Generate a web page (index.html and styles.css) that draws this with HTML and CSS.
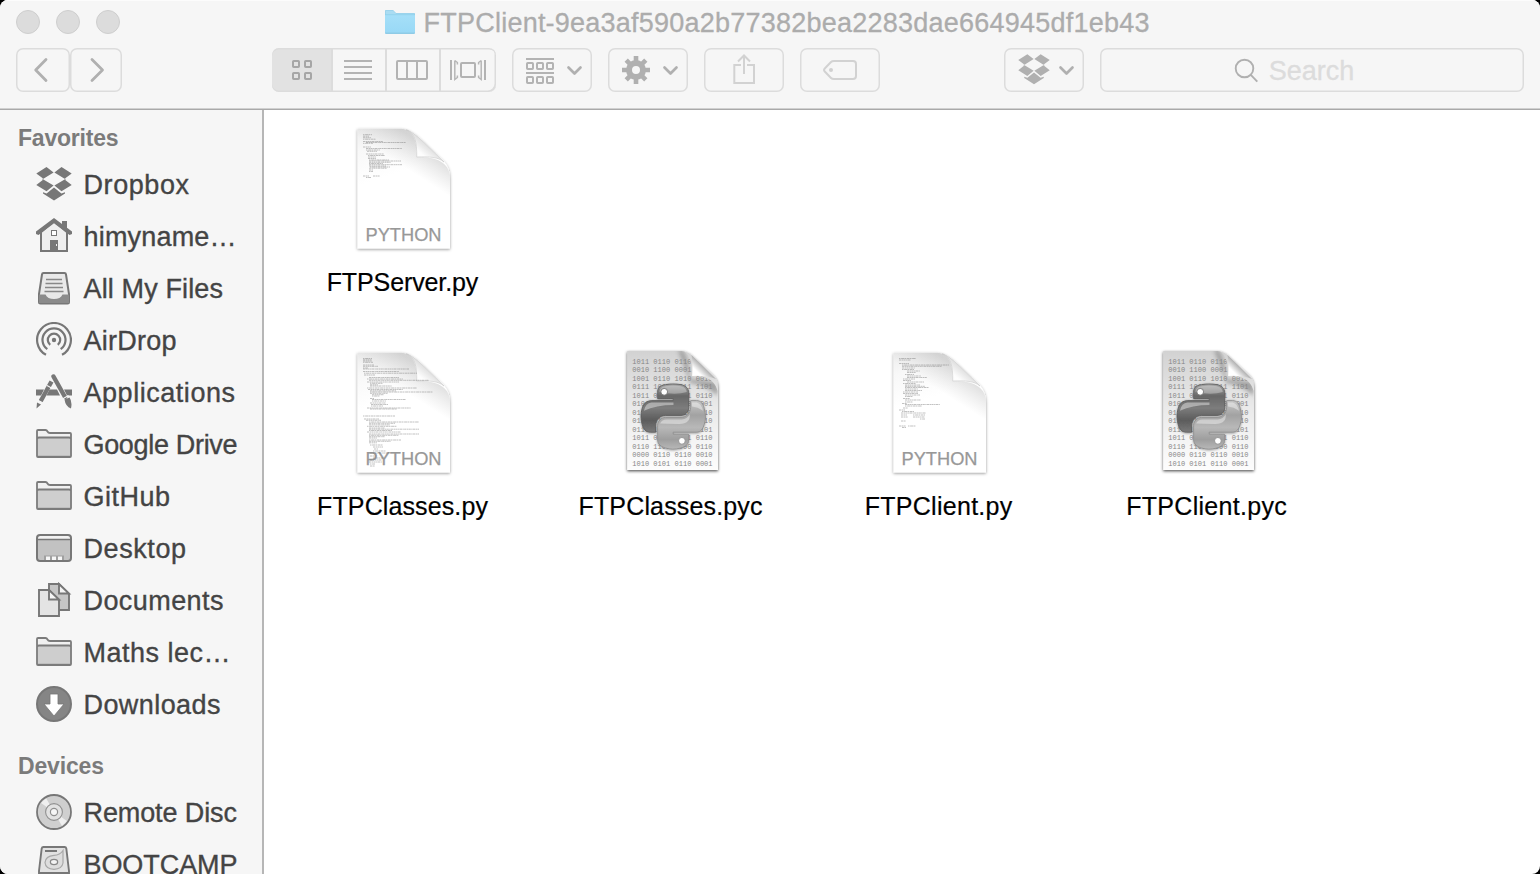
FILE: index.html
```html
<!DOCTYPE html>
<html lang="en">
<head>
<meta charset="utf-8">
<title>Finder</title>
<link rel="stylesheet" href="styles.css">
</head>
<body>
<svg class="defs" aria-hidden="true">
  <defs>
    <linearGradient id="gPage" x1="0" y1="0" x2="0.25" y2="1"><stop offset="0" stop-color="#ededed"/><stop offset=".18" stop-color="#f8f8f8"/><stop offset=".45" stop-color="#fff"/></linearGradient>
    <linearGradient id="gShade" x1="0.25" y1="0.8" x2=".72" y2=".22"><stop offset=".5" stop-color="#bbb" stop-opacity="0"/><stop offset="1" stop-color="#aaa" stop-opacity=".45"/></linearGradient>
    <linearGradient id="gFlap" x1="0" y1="1" x2=".55" y2=".45"><stop offset="0" stop-color="#fff"/><stop offset=".6" stop-color="#fdfdfd"/><stop offset="1" stop-color="#dedede"/></linearGradient>
    <linearGradient id="gByte" x1="0" y1="0" x2="0" y2="1"><stop offset="0" stop-color="#d2d2d2"/><stop offset=".5" stop-color="#ebebeb"/><stop offset="1" stop-color="#fdfdfd"/></linearGradient>
    <linearGradient id="gByteFlap" x1="0" y1="1" x2=".6" y2=".4"><stop offset="0" stop-color="#fff"/><stop offset=".45" stop-color="#fff"/><stop offset="1" stop-color="#8f8f8f"/></linearGradient>
    <linearGradient id="gSnakeA" x1="0" y1="0" x2="0" y2="1"><stop offset="0" stop-color="#a5a5a5"/><stop offset=".25" stop-color="#686868"/><stop offset=".5" stop-color="#7c7c7c"/><stop offset=".75" stop-color="#5c5c5c"/><stop offset="1" stop-color="#7a7a7a"/></linearGradient>
    <linearGradient id="gSnakeB" x1="0" y1="0" x2="0" y2="1"><stop offset="0" stop-color="#c9c9c9"/><stop offset=".3" stop-color="#a2a2a2"/><stop offset=".55" stop-color="#b8b8b8"/><stop offset=".8" stop-color="#9e9e9e"/><stop offset="1" stop-color="#b8b8b8"/></linearGradient>
    <linearGradient id="gFolder" x1="0" y1="0" x2="0" y2="1"><stop offset="0" stop-color="#a5dff8"/><stop offset="1" stop-color="#99d9f6"/></linearGradient>
    <filter id="fDrop" x="-15%" y="-15%" width="130%" height="130%"><feDropShadow dx="0" dy="1" stdDeviation="1.4" flood-color="#000" flood-opacity=".42"/></filter>
    <filter id="fDropDark" x="-15%" y="-15%" width="130%" height="130%"><feDropShadow dx="0" dy="1.2" stdDeviation="1.6" flood-color="#000" flood-opacity=".7"/></filter>
    <filter id="fSoft" x="-40%" y="-40%" width="180%" height="180%"><feGaussianBlur stdDeviation="2.2"/></filter>
    <clipPath id="cByte"><path d="M7.200 5H61.500C70 6 72.300 18 72.300 30C84 30 94 32 97.700 45V124H7.200Z"/></clipPath>

    <symbol id="dropbox" viewBox="0 0 36 36">
      <path d="M0.300 7.500 10.500 1 17.600 6.400 7.400 12.800ZM35.700 7.500 25.500 1 18.400 6.400 28.600 12.800ZM0.300 19 7.400 13.400 17.600 19.400 10.500 25.300ZM35.700 19 28.600 13.400 18.400 19.400 25.500 25.300ZM7 26.300 10.600 27.500 18 21.500 25.400 27.500 29 26.300V27.600L18 34.600 7 27.600Z"/>
      <path d="M6.800 12.600V14M29.200 12.600V14" stroke="currentColor" stroke-width=".6"/>
    </symbol>
    <symbol id="folder" viewBox="0 0 36 36">
      <path d="M1 31V5Q1 4 2 4H9.500Q10.800 4 11.500 5.500T14 7H34Q35 7 35 8V31Z" fill="#f0f0f0"/>
      <path d="M1.500 11H34.500V31H1.500Z" fill="#cecece"/>
      <path d="M2 29.700H34" stroke="#bbb" stroke-width="1"/>
      <path d="M1 30V5Q1 4 2 4H9.500Q10.800 4 11.500 5.500T14 7H34Q35 7 35 8V30Q35 31 34 31H2Q1 31 1 30ZM1 13Q1 11.500 3 11.500H33Q35 11.500 35 13" fill="none" stroke="#7b7b7b" stroke-width="1.800"/>
    </symbol>
    <symbol id="chev" viewBox="0 0 16 10"><path d="M2 2 8 8 14 2" fill="none" stroke="#b0b0b0" stroke-width="2.700" stroke-linecap="round" stroke-linejoin="round"/></symbol>

    <symbol id="sheet" viewBox="0 0 104 132">
      <g filter="url(#fDrop)"><path d="M5.500 6.700H48C60 6.700 66 14.500 92 39.500Q98 46 98 56V126.500H5.500Z" fill="url(#gPage)"/></g>
      <path d="M5.500 6.700H48C60 6.700 65 16 64.700 35C80 34.500 98 38 98 56V80L5.500 80Z" fill="url(#gShade)"/>
      <path d="M54 7.700C63 11 65 20 64.700 35C78 34.500 86 35 92 40L72 20.500Q60 9 54 7.700Z" fill="url(#gFlap)" stroke="#c8c8c8" stroke-width=".6"/>
      <text x="13.500" y="119.300" class="kind" textLength="76" lengthAdjust="spacingAndGlyphs">PYTHON</text>
    </symbol>

    <symbol id="bytecode" viewBox="0 0 104 132">
      <path d="M7.200 5H61.500Q67 5 72 9.500L92 28Q98 33 98 41V124H7.200Z" fill="url(#gByte)" filter="url(#fDropDark)"/>
      <g clip-path="url(#cByte)">
        <path d="M62 4Q69 12 70 33L98 36V50Q84 38 70 37Q64 18 58 4Z" fill="#666" opacity=".5" filter="url(#fSoft)"/>
        <g class="bits">
          <text x="12.200" y="17.600">1011 0110 0110</text>
          <text x="12.200" y="26.100">0010 1100 0001</text>
          <text x="12.200" y="34.600">1001 0110 1010 0010</text>
          <text x="12.200" y="43.100">0111 1010 0011 1101</text>
          <text x="12.200" y="51.600">1011 0110 0101 0110</text>
          <text x="12.200" y="60.100">0101 1010 0110 1001</text>
          <text x="12.200" y="68.600">0110 1100 1010 0110</text>
          <text x="12.200" y="77.100">0110 0101 1100 0110</text>
          <text x="12.200" y="85.600">0110 1010 0110 0101</text>
          <text x="12.200" y="94.100">1011 0110 0101 0110</text>
          <text x="12.200" y="102.600">0110 1100 1000 0110</text>
          <text x="12.200" y="111.100">0000 0110 0110 0010</text>
          <text x="12.200" y="119.600">1010 0101 0110 0001</text>
        </g>
      </g>
      <path d="M71.500 9Q73 18 72.200 30Q85 29 96 33Z" fill="url(#gByteFlap)"/>
      <g transform="translate(21 38) scale(.58)" stroke-width="1.400">
        <g filter="url(#fDrop)">
        <path fill="url(#gSnakeA)" stroke="#5c5c5c" d="M54.919 0c-4.584.022-8.961.413-12.813 1.095C30.760 3.099 28.700 7.295 28.700 15.032v10.219h26.813v3.406H18.638c-7.793 0-14.616 4.684-16.750 13.594-2.462 10.213-2.571 16.586 0 27.250 1.905 7.938 6.457 13.594 14.250 13.594h9.219v-12.250c0-8.850 7.657-16.657 16.750-16.657h26.781c7.455 0 13.407-6.138 13.407-13.625v-25.530c0-7.266-6.130-12.725-13.407-13.937C64.282.328 59.502-.020 54.918 0z"/>
        <path fill="url(#gSnakeB)" stroke="#8b8b8b" d="M85.638 28.657v11.906c0 9.231-7.826 17-16.750 17H42.107c-7.336 0-13.407 6.279-13.407 13.625v25.531c0 7.266 6.319 11.540 13.407 13.625 8.488 2.496 16.627 2.947 26.781 0 6.750-1.954 13.407-5.888 13.407-13.625V86.501H55.513v-3.405h40.188c7.793 0 10.696-5.436 13.406-13.594 2.800-8.399 2.681-16.476 0-27.250-1.925-7.758-5.604-13.594-13.406-13.594z"/>
        </g>
        <path d="M32 14Q32 5 42 4 56 1 69 4 78 6 79 14 60 20 32 14Z" fill="#fff" opacity=".32"/>
        <path d="M5 46Q8 33 18 32H56V36Q26 36 5 46ZM88 32H96Q104 34 107 46 98 40 88 39ZM33 68Q36 61 44 61H70Q80 60 84 52 86 68 66 69 44 68 33 68Z" fill="#fff" opacity=".4"/>
        <circle cx="40" cy="13.500" r="5.800" fill="#fff" stroke="#666"/>
        <circle cx="70.500" cy="98" r="5.800" fill="#fff" stroke="#888"/>
      </g>
    </symbol>
  </defs>
</svg>

<div class="window">
  <header class="toolbar">
    <div class="titlebar">
      <div class="lights"><i></i><i></i><i></i></div>
      <h1 class="title">
        <svg class="proxy" viewBox="0 0 32 26"><path d="M1 24V2Q1 1 2 1H9L12 4H30Q31 4 31 5V24Q31 25 30 25H2Q1 25 1 24Z" fill="#8fcbe6"/><path d="M1.500 5V2.500Q1.500 1.500 2.500 1.500H9L12 4.500H30.500V6H1.500Z" fill="#aadcf2"/><path d="M1 6H31V23.500H1Z" fill="url(#gFolder)"/><path d="M1 5.700H31" stroke="#8ccfec" stroke-width=".8"/></svg>
        <span class="fit" data-width="726">FTPClient-9ea3af590a2b77382bea2283dae664945df1eb43</span>
      </h1>
    </div>
    <div class="tools">
      <div class="nav">
        <button class="btn back"><svg viewBox="16 48 54 44"><path d="M46 59.500 35.700 70 46 80.500" class="arrow"/></svg></button>
        <button class="btn forward"><svg viewBox="70 48 52 44"><path d="M92 59.500 102.500 70 92 80.500" class="arrow"/></svg></button>
      </div>
      <div class="views">
        <button class="seg on"><svg viewBox="272 48 59 44"><g fill="none" stroke="#a6a6a6" stroke-width="2"><rect x="293" y="61" width="6" height="6" rx=".8"/><rect x="305" y="61" width="6" height="6" rx=".8"/><rect x="293" y="73" width="6" height="6" rx=".8"/><rect x="305" y="73" width="6" height="6" rx=".8"/></g></svg></button>
        <button class="seg"><svg viewBox="333 48 52 44"><path d="M344 61H372M344 67H372M344 73H372M344 79H372" class="ln"/></svg></button>
        <button class="seg"><svg viewBox="387 48 52 44"><rect x="397" y="61" width="30" height="18" rx="1" class="ln"/><path d="M407 61V79M417 61V79" class="ln"/></svg></button>
        <button class="seg"><svg viewBox="441 48 55 44"><path d="M451 60V80M485 60V80" class="ln"/><rect x="461" y="63" width="14" height="14" rx="1" class="ln"/><path d="M454.800 60.500V79.500L457.400 77.500V75.500M454.800 60.500 457.400 62.500V64.500M481.200 60.500V79.500L478.600 77.500V75.500M481.200 60.500 478.600 62.500V64.500" fill="none" stroke="#b6b6b6" stroke-width="1.500"/></svg></button>
      </div>
      <button class="btn menu"><svg viewBox="512 48 80 44"><path d="M526 59H554M526 73H554" class="ln"/><g class="ln"><rect x="527" y="63" width="6" height="6" rx=".8"/><rect x="537" y="63" width="6" height="6" rx=".8"/><rect x="547" y="63" width="6" height="6" rx=".8"/><rect x="527" y="77" width="6" height="6" rx=".8"/><rect x="537" y="77" width="6" height="6" rx=".8"/><rect x="547" y="77" width="6" height="6" rx=".8"/></g><use href="#chev" x="566.500" y="65.500" width="16" height="10"/></svg></button>
      <button class="btn menu"><svg viewBox="608 48 80 44"><g stroke="#b0b0b0" stroke-width="4.600"><path d="M636 56V84M622 70H650M626.200 60.200 645.800 79.800M645.800 60.200 626.200 79.800"/></g><circle cx="636" cy="70" r="7" fill="#f6f6f6" stroke="#b0b0b0" stroke-width="6"/><use href="#chev" x="662.500" y="65.500" width="16" height="10"/></svg></button>
      <button class="btn menu"><svg viewBox="704 48 80 44"><path d="M741 65H734.300V83H754V65H747M744 74V55.500M738 61.500 744 55.500 750 61.500" class="pale"/></svg></button>
      <button class="btn menu"><svg viewBox="800 48 80 44"><path d="M824 70Q824 69.200 825 68.200L831 62Q832 61 834 61H853Q856 61 856 64V76Q856 79 853 79H834Q832 79 831 78L825 71.800Q824 70.800 824 70Z" class="pale"/><circle cx="831" cy="70" r="2" fill="#d0d0d0"/></svg></button>
      <button class="btn menu drop"><svg viewBox="1004 48 80 44"><use href="#dropbox" x="1018" y="53.400" width="32" height="32" fill="#b0b0b0" color="#b0b0b0"/><use href="#chev" x="1058.500" y="65.500" width="16" height="10"/></svg></button>
      <div class="btn search"><svg viewBox="0 0 26 26"><circle cx="10.500" cy="10.500" r="8.800"/><path d="M16.800 16.800 23.300 23.700"/></svg><span class="fit" data-width="85.500">Search</span></div>
    </div>
  </header>

  <div class="body">
    <nav class="sidebar">
      <h2><span class="fit" data-width="100.500">Favorites</span></h2>
      <ul>
        <li><svg viewBox="0 0 36 36"><use href="#dropbox" fill="#777" color="#777"/></svg><span class="fit" data-width="105.500">Dropbox</span></li>
        <li><svg viewBox="0 0 36 36"><path d="M5 14V33H31V14L18 3Z" fill="#efefef" stroke="#777" stroke-width="2"/><path d="M26 9V3H31V12ZM18 0 36 13.500V16L33.500 17 18 5.300 2.500 17 0 16V13.500ZM14 22H22V33H14Z" fill="#777"/><rect x="15.500" y="12.500" width="5" height="5" fill="#fff" stroke="#777"/><path d="M20.500 26V28" stroke="#eee"/></svg><span class="fit" data-width="153">himyname…</span></li>
        <li><svg viewBox="0 0 36 36"><path d="M7.500 3H28.500Q29.800 3 30 4.500L33 24V32Q33 33.500 31.500 33.500H4.500Q3 33.500 3 32V24L6 4.500Q6.200 3 7.500 3Z" fill="#e9e9e9" stroke="#777" stroke-width="2"/><path d="M3 24.500H9.500Q11.500 29 18 29T26.500 24.500H33V33H3Z" fill="#8b8b8b"/><path d="M10 9.500H26M9.500 13.500H26.500M9 17.500H27M8.500 21.500H27.500" stroke="#888" stroke-width="1.700"/></svg><span class="fit" data-width="139.500">All My Files</span></li>
        <li><svg viewBox="0 0 36 36"><g fill="none" stroke="#777" stroke-width="2.200"><path d="M10 32.800A16.900 16.900 0 1 1 26 32.800"/><path d="M11.300 27.200A11.500 11.500 0 1 1 24.700 27.200"/><path d="M14.200 22.800A6.200 6.200 0 1 1 21.800 22.800"/></g><circle cx="18" cy="18" r="2.200" fill="#777"/></svg><span class="fit" data-width="93">AirDrop</span></li>
        <li><svg viewBox="0 0 36 36"><path d="M0 15.500H8L5 21.500H0ZM13.500 15.500H21L24 21.500H10.500ZM28 15.500H36V21.500H31Z" fill="#777"/><g fill="none" stroke="#777" stroke-width="4.400"><path d="M17.500 2.500 29 23" stroke-linecap="round"/><path d="M15.500 7.500 4.500 27.500"/></g><path d="M28.500 25.500 33.500 23.500Q36.500 27.500 35 34.500 29.500 32.500 28.500 25.500ZM1 28.500 5 30.500 0.500 34.500Z" fill="#777"/><path d="M11 11.500 15.500 14M26 25.300 32.500 21.500M1.500 26 7.500 29.300" stroke="#f6f6f6" stroke-width="1.100"/></svg><span class="fit" data-width="151.500">Applications</span></li>
        <li><svg viewBox="0 0 36 36"><use href="#folder"/></svg><span class="fit" data-width="154">Google Drive</span></li>
        <li><svg viewBox="0 0 36 36"><use href="#folder"/></svg><span class="fit" data-width="86.500">GitHub</span></li>
        <li><svg viewBox="0 0 36 36"><rect x="1" y="5" width="34" height="26" rx="3" fill="#c2c2c2"/><path d="M2 9V7Q2 6 4 6H32Q34 6 34 7V9Z" fill="#f2f2f2"/><path d="M2 9.500H34" stroke="#777" stroke-width="1.500"/><path d="M8 25.500H28V30.500H8Z" fill="#a0a0a0"/><path d="M10 26.500H14V30H10ZM16 26.500H20V30H16ZM22 26.500H26V30H22Z" fill="#f6f6f6"/><rect x="1" y="5" width="34" height="26" rx="3" fill="none" stroke="#777" stroke-width="2"/></svg><span class="fit" data-width="102.500">Desktop</span></li>
        <li><svg viewBox="0 0 36 36"><g stroke="#777" stroke-width="1.900"><path d="M13 2H23L33 12V28H13Z" fill="#c6c6c6"/><path d="M23 2V11.500H33Z" fill="#f4f4f4"/><path d="M3 8H13L23 18V34H3Z" fill="#e4e4e4"/><path d="M13 8V17.500H23Z" fill="#f6f6f6"/></g></svg><span class="fit" data-width="140">Documents</span></li>
        <li><svg viewBox="0 0 36 36"><use href="#folder"/></svg><span class="fit" data-width="147">Maths lec…</span></li>
        <li><svg viewBox="0 0 36 36"><circle cx="18" cy="18" r="17" fill="#858585" stroke="#777" stroke-width="2"/><path d="M14 8H22V18H28L18 30 8 18H14Z" fill="#fff" stroke="#777" stroke-width=".8"/></svg><span class="fit" data-width="137">Downloads</span></li>
      </ul>
      <h2 class="later"><span class="fit" data-width="86">Devices</span></h2>
      <ul>
        <li><svg viewBox="0 0 36 36"><circle cx="18" cy="18" r="17" fill="#cfcfcf"/><path d="M18 18 5 9 10 4ZM18 18 31 27 26 32Z" fill="#efefef"/><circle cx="18" cy="18" r="17" fill="none" stroke="#777" stroke-width="1.800"/><circle cx="18" cy="18" r="8.400" fill="#e2e2e2" stroke="#909090" stroke-width="1.100"/><circle cx="18" cy="18" r="3.600" fill="#f6f6f6" stroke="#909090" stroke-width="1.200"/></svg><span class="fit" data-width="153.500">Remote Disc</span></li>
        <li><svg viewBox="0 0 36 36"><path d="M7.500 1H28.500Q30 1 30.300 2.500L33 25V33H3V25L5.700 2.500Q6 1 7.500 1Z" fill="#e2e2e2" stroke="#777" stroke-width="1.900"/><path d="M3 27H33" stroke="#777" stroke-width="1.900"/><path d="M9 5H21" stroke="#777" stroke-width="2"/><path d="M27 4.500V17Q26 23 18 23.300 9.500 23 9 16.500 9.500 10 18 9.300 24 9 27 4.500Z" fill="#ddd" stroke="#a8a8a8" stroke-width="1.200"/><ellipse cx="18" cy="16" rx="3.600" ry="2.600" fill="#f4f4f4" stroke="#888" stroke-width="1.300"/></svg><span class="fit" data-width="154">BOOTCAMP</span></li>
      </ul>
    </nav>
    <main class="files">
      <figure class="file first"><svg viewBox="0 0 104 132"><use href="#sheet"/><g class="code" data-code="server"></g></svg><figcaption class="fit" data-width="151.700">FTPServer.py</figcaption></figure>
      <figure class="file"><svg viewBox="0 0 104 132"><use href="#sheet"/><g class="code" data-code="classes"></g></svg><figcaption class="fit" data-width="170.800">FTPClasses.py</figcaption></figure>
      <figure class="file"><svg viewBox="0 0 104 132"><use href="#bytecode"/></svg><figcaption class="fit" data-width="184">FTPClasses.pyc</figcaption></figure>
      <figure class="file"><svg viewBox="0 0 104 132"><use href="#sheet"/><g class="code" data-code="client"></g></svg><figcaption class="fit" data-width="147.600">FTPClient.py</figcaption></figure>
      <figure class="file"><svg viewBox="0 0 104 132"><use href="#bytecode"/></svg><figcaption class="fit" data-width="160.600">FTPClient.pyc</figcaption></figure>
    </main>
  </div>
</div>
<script src="app.js"></script>
</body>
</html>
```

FILE: styles.css
```css
* { box-sizing: border-box; }
body { margin: 0; background: #000; font-family: "Liberation Sans", Arial, sans-serif; overflow: hidden; }
h1, h2, ul, figure { margin: 0; padding: 0; }
ul { list-style: none; }
svg { display: block; flex: none; }
.defs { position: absolute; width: 0; height: 0; }
.fit { display: inline-block; white-space: nowrap; }

.window { width: 1540px; height: 874px; border-radius: 8px; overflow: hidden; background: #fff; display: flex; flex-direction: column; }

.toolbar { height: 110px; flex: none; background: #f6f6f6; border-bottom: 1px solid #a9a9a9; box-shadow: inset 0 -1px #d0d0d0, inset 0 1px #fcfcfc; }
.titlebar { height: 48px; display: flex; }
.lights { display: flex; gap: 16px; padding: 10px 0 0 16px; width: 384px; }
.lights i { width: 24px; height: 24px; border-radius: 50%; background: #dcdcdc; border: 1px solid #cecece; }
.title { display: flex; font-weight: 400; font-size: 27px; line-height: 46px; color: #acacac; -webkit-text-stroke: .3px #acacac; }
.proxy { width: 32px; height: 26px; margin: 9px 7.500px 0 0; }

.tools { display: flex; padding: 0 16px; }
.btn, .seg { appearance: none; border: 0; padding: 0; margin: 0; background: transparent; display: block; height: 44px; }
.btn { border-radius: 7px; box-shadow: inset 0 0 0 1.500px #dcdcdc; }
.btn > svg, .seg > svg { width: 100%; height: 44px; }
.nav { display: flex; width: 256px; }
.back { width: 54px; }
.forward { width: 52px; }
.arrow { fill: none; stroke: #b0b0b0; stroke-width: 2.800; stroke-linecap: round; stroke-linejoin: round; }
.views { display: flex; gap: 2px; width: 224px; height: 44px; border-radius: 7px; overflow: hidden; background: #dcdcdc; padding: 0; margin-right: 16px; }
.seg { background: #f6f6f6; width: 52px; box-shadow: inset 0 1.500px #dcdcdc, inset 0 -1.500px #dcdcdc; }
.seg.on { width: 59px; background: #e2e2e2; border-radius: 7px 0 0 7px; }
.seg:last-child { width: 55px; border-radius: 0 7px 7px 0; box-shadow: inset 0 1.500px #dcdcdc, inset -1.500px -1.500px #dcdcdc; }
.ln { fill: none; stroke: #b3b3b3; stroke-width: 2; }
.pale { fill: none; stroke: #d2d2d2; stroke-width: 2; }
.menu { width: 80px; margin-right: 16px; }
.drop { margin-left: 108px; }
.search { flex: 1; display: flex; justify-content: center; padding-right: 36px; font-size: 27px; line-height: 46px; color: #dcdcdc; -webkit-text-stroke: .3px #dcdcdc; }
.search > svg { width: 26px; height: 26px; margin: 10px 9px 0 0; fill: none; stroke: #b0b0b0; stroke-width: 1.900; }

.body { flex: 1; display: flex; min-height: 0; }
.sidebar { width: 264px; flex: none; background: #f6f6f6; border-right: 2px solid #b6b6b6; overflow: hidden; color: #444; }
.sidebar h2 { font-size: 23px; line-height: 40px; height: 48px; padding: 8px 0 0 18px; color: #7b7b7b; }
.sidebar h2.later { height: 56px; padding-top: 16px; }
.sidebar li { height: 52px; display: flex; align-items: center; padding-left: 36px; gap: 11.500px; font-size: 27px; line-height: 50px; }
.sidebar li svg { width: 36px; height: 36px; }
.sidebar li span { padding-top: 2px; -webkit-text-stroke: .35px #444; }

.files { flex: 1; display: grid; grid-template-columns: repeat(4, 268px); grid-auto-rows: 224px; padding: 12px 0 0 5.500px; }
.file { display: flex; flex-direction: column; align-items: center; font-size: 25px; line-height: 30px; color: #000; }
.file.first { grid-column: 1 / -1; width: 268px; }
.file svg { width: 104px; height: 132px; margin-bottom: 13px; }
.file figcaption { -webkit-text-stroke: .2px #000; position: relative; left: -1px; }
.kind { font: 18px "Liberation Sans", Arial, sans-serif; fill: #989898; stroke: #989898; stroke-width: .25; }
.bits { font: 7px "Liberation Mono", monospace; fill: #868686; white-space: pre; letter-spacing: .03px; }
.code path { fill: none; stroke: #777; stroke-width: .75; opacity: .6; }
```

FILE: app.js
```js
document.querySelectorAll('.fit').forEach(el => {
  const natural = el.getBoundingClientRect().width;
  const n = [...el.textContent].length;
  const spacing = (parseFloat(el.dataset.width) - natural) / (n - 1);
  el.style.letterSpacing = spacing + 'px';
  el.style.marginRight = -spacing + 'px';
});

// Source previews: each entry is [y, indent, length].
const previews = {
  server: [[12.7,11,9],[14.2,11,6],[15.7,11,8],[17.2,11,13],[19.5,11,20],[20.5,14,40],[21.3,11,10],
    [25,11,8],[26.5,14,36],[28,14,14],[29.3,15,10],[32,14,18],[33.5,16,17],[35,16,8],[36.5,16,8],[38,17,20],[39,17,32],[40.3,17,22],[41.5,17,14],[42.7,17,33],[44,17,17],[45,18,20],[46.2,17,18],[48,17,4],[49.5,17,4],[54,11,6],[54,21,7],[55.5,14,5]],
  classes: [[12.5,11,9],[13.8,11,9],[15,11,9],[16.3,11,10],[19,11,11],[20.3,11,15],[22,11,5],[23,11,46],[25.5,11,36],[27.2,12,53],[29,12,11],
    [31.5,17,30],[33,15,36],[34.3,17,60],[36,15,32],[37.3,18,13],[38.8,18,8],[40,18,22],[42,15,50],[43.5,16,35],[44.8,18,26],[46,18,63],[47.3,18,18],[48.7,20,12],[50,20,8],[52.5,18,4],[53.5,20,34],[55,20,14],[57,18,16],[58.5,19,17],[60,19,12],[62,15,44],[63,18,27],[70,11,32],[73,12,15],[74.3,14,15],[76,17,50],[77.3,17,26],[78.8,17,21],[80.3,15,30],[82,17,16],[83.2,17,50],[84.5,17,23],[86,15,34],[88,17,50],[89.3,17,30],[90.7,17,16],[92,17,8],[94,17,32],[95.3,17,22],[96.8,17,8],[99,18,13],[101,21,10],[103,22,4],[105,21,13],[107,18,20],[110,18,7],[112,21,10],[114,18,12],[116,17,13],[118,18,5],[120,18,5]],
  client: [[12.5,11,17],[14,11,12],[17.5,11,10],[19,14,47],[20.3,14,40],[22,14,13],[23.5,14,12],[25,19,13],[26.5,19,9],[28.5,17,9],[30,19,14],[31.5,19,20],[33,15,12],[34.5,15,8],[36,19,17],[37.5,15,13],[39,17,15],[40.3,17,20],[41.5,17,24],[43,17,13],[44.5,17,17],[46,15,15],[47.5,15,15],[49,17,15],[50.5,17,8],[52.5,15,7],[54,17,16],[56,17,8],[57.5,14,5],[58.5,17,35],[60,17,17],[62,15,5],[64,11,6],[65.5,14,12],[67,13,25],[69,13,6],[69,25,12],[71,13,7],[71,25,12],[73,32,5],[75,13,5],[80,11,7],[80,20,8],[81.5,14,4]]
};
document.querySelectorAll('.code').forEach(g => {
  previews[g.dataset.code].forEach(([y, x, w], i) => {
    const p = document.createElementNS('http://www.w3.org/2000/svg', 'path');
    p.setAttribute('d', `M${x} ${y}h${w}`);
    p.setAttribute('stroke-dasharray', i % 3 ? '2.2 .5 1.300 .4' : '1.500 .6 3 .4');
    g.appendChild(p);
  });
});
```
